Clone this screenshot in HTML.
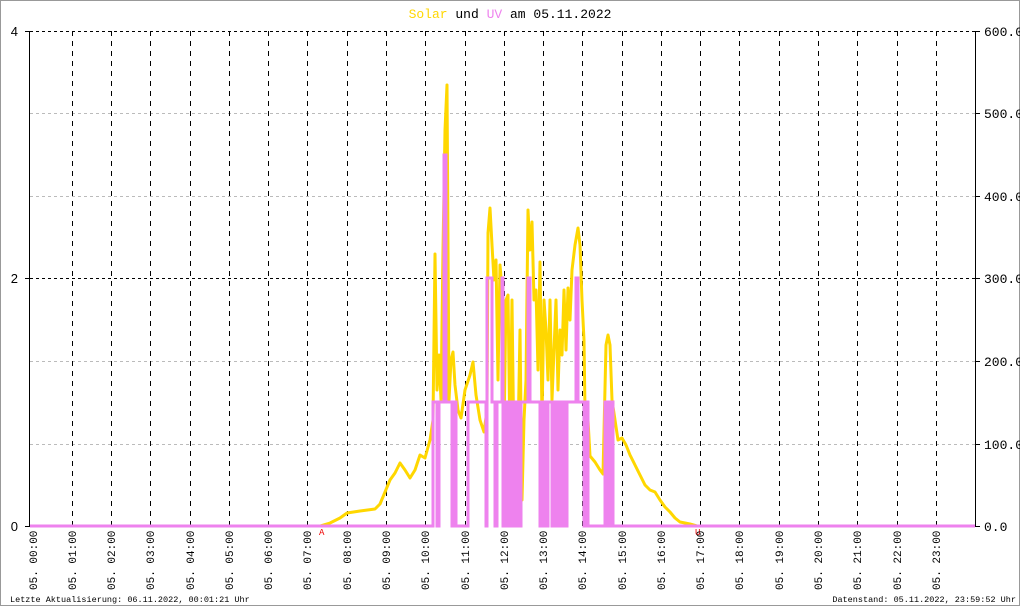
<!DOCTYPE html>
<html><head><meta charset="utf-8"><style>
html,body{margin:0;padding:0;background:#fff}
svg{display:block}
text{font-family:"Liberation Mono",monospace}
</style></head><body>
<svg width="1020" height="606" viewBox="0 0 1020 606" xmlns="http://www.w3.org/2000/svg">
<rect x="0.5" y="0.5" width="1019" height="605" fill="#fff" stroke="#999"/>
<text x="510" y="18" font-size="13" text-anchor="middle"><tspan fill="#ffd700">Solar</tspan><tspan fill="#000"> und </tspan><tspan fill="#ee82ee">UV</tspan><tspan fill="#000"> am 05.11.2022</tspan></text>
<g stroke="#bbb" stroke-dasharray="3,3" stroke-width="1">
<line x1="30" y1="113.5" x2="975" y2="113.5"/><line x1="30" y1="196.5" x2="975" y2="196.5"/>
<line x1="30" y1="361.5" x2="975" y2="361.5"/><line x1="30" y1="444.5" x2="975" y2="444.5"/>
</g>
<g stroke="#000" stroke-dasharray="3,3" stroke-width="1">
<line x1="30" y1="31.5" x2="975" y2="31.5"/><line x1="30" y1="278.5" x2="975" y2="278.5"/>
</g>
<g stroke="#000" stroke-dasharray="5,5" stroke-width="1" id="vl">
<line x1="72.5" y1="31" x2="72.5" y2="526"/><line x1="111.5" y1="31" x2="111.5" y2="526"/>
<line x1="150.5" y1="31" x2="150.5" y2="526"/><line x1="190.5" y1="31" x2="190.5" y2="526"/>
<line x1="229.5" y1="31" x2="229.5" y2="526"/><line x1="268.5" y1="31" x2="268.5" y2="526"/>
<line x1="307.5" y1="31" x2="307.5" y2="526"/><line x1="347.5" y1="31" x2="347.5" y2="526"/>
<line x1="386.5" y1="31" x2="386.5" y2="526"/><line x1="425.5" y1="31" x2="425.5" y2="526"/>
<line x1="465.5" y1="31" x2="465.5" y2="526"/><line x1="504.5" y1="31" x2="504.5" y2="526"/>
<line x1="543.5" y1="31" x2="543.5" y2="526"/><line x1="582.5" y1="31" x2="582.5" y2="526"/>
<line x1="622.5" y1="31" x2="622.5" y2="526"/><line x1="661.5" y1="31" x2="661.5" y2="526"/>
<line x1="700.5" y1="31" x2="700.5" y2="526"/><line x1="739.5" y1="31" x2="739.5" y2="526"/>
<line x1="779.5" y1="31" x2="779.5" y2="526"/><line x1="818.5" y1="31" x2="818.5" y2="526"/>
<line x1="857.5" y1="31" x2="857.5" y2="526"/><line x1="897.5" y1="31" x2="897.5" y2="526"/>
<line x1="936.5" y1="31" x2="936.5" y2="526"/>
</g>
<line x1="29.5" y1="31" x2="29.5" y2="527" stroke="#000"/>
<line x1="975.5" y1="31" x2="975.5" y2="527" stroke="#000"/>
<g stroke="#000"><line x1="25" y1="31.5" x2="29" y2="31.5"/><line x1="25" y1="278.5" x2="29" y2="278.5"/><line x1="25" y1="526.5" x2="29" y2="526.5"/>
<line x1="976" y1="31.5" x2="980" y2="31.5"/><line x1="976" y1="113.5" x2="980" y2="113.5"/><line x1="976" y1="196.5" x2="980" y2="196.5"/><line x1="976" y1="278.5" x2="980" y2="278.5"/><line x1="976" y1="361.5" x2="980" y2="361.5"/><line x1="976" y1="444.5" x2="980" y2="444.5"/><line x1="976" y1="526.5" x2="980" y2="526.5"/></g>
<g font-family="Liberation Sans,sans-serif" font-size="13" fill="#000" text-anchor="end">
<text x="18" y="36" style="font-family:'Liberation Sans',sans-serif">4</text>
<text x="18" y="283" style="font-family:'Liberation Sans',sans-serif">2</text>
<text x="18" y="531" style="font-family:'Liberation Sans',sans-serif">0</text>
</g>
<g font-size="13" fill="#000">
<text x="984" y="36">600.0</text><text x="984" y="118">500.0</text><text x="984" y="201">400.0</text>
<text x="984" y="283">300.0</text><text x="984" y="366">200.0</text><text x="984" y="449">100.0</text><text x="984" y="531">0.0</text>
</g>
<polyline fill="none" stroke="#ffd700" stroke-width="3" stroke-linejoin="round" points="30,526 320,526 330,523 340,518 347,513 360,511 375,509 380,504 385,492 390,480 395,473 400,463 405,470 410,478 415,470 420,455 425,458 430,440 433,420 435,254 437,390 439,355 441,400 443,250 445,130 447,85 449,400 451,360 453,352 455,385 458,410 461,418 465,390 470,375 473,362 476,395 480,420 484,432 487,410 488,233 490,208 492,245 494,280 496,260 498,380 500,265 502,290 504,430 506,300 508,295 510,440 512,300 514,460 516,410 518,440 520,330 522,500 524,420 526,380 528,210 530,250 532,222 534,300 536,290 538,370 540,262 542,420 544,300 546,330 548,380 550,300 552,400 554,350 556,300 558,390 560,330 562,355 564,290 566,350 568,288 570,320 572,270 575,245 578,228 580,245 582,300 584,340 586,480 588,420 590,456 595,462 600,470 603,474 606,345 608,335 610,345 612,400 615,420 618,440 622,438 626,445 630,455 635,465 640,475 645,485 650,490 655,492 660,500 665,507 670,512 675,518 680,522 690,524 697,526 975,526"/>
<polyline fill="none" stroke="#ee82ee" stroke-width="3" points="30,526 433,526 433,402 437,402 437,526 439,526 439,402 444,402 444,155 446,155 446,402 452,402 452,526 455,526 455,402 456,402 456,526 468,526 468,402 486,402 486,526 487,526 487,278 492,278 492,402 495,402 495,526 497,526 497,402 502,402 502,278 503,278 503,526 505,526 505,402 507,402 507,526 510,526 510,402 513,402 513,526 515,526 515,402 518,402 518,526 521,526 521,402 528,402 528,278 530,278 530,402 540,402 540,526 542,526 542,402 545,402 545,526 548,526 548,402 552,402 552,526 555,526 555,402 558,402 558,526 561,526 561,402 564,402 564,526 567,526 567,402 576,402 576,278 578,278 578,402 584,402 584,526 586,526 586,402 588,402 588,526 605,526 605,402 608,402 608,526 611,526 611,402 613,402 613,526 975,526"/>
<text x="319" y="535" font-size="9" fill="#e00">A</text>
<text x="695" y="535" font-size="9" fill="#e00">U</text>
<g font-size="11" fill="#000">
<text transform="translate(37,590) rotate(-90)">05. 00:00</text>
<text transform="translate(76,590) rotate(-90)">05. 01:00</text>
<text transform="translate(115,590) rotate(-90)">05. 02:00</text>
<text transform="translate(154,590) rotate(-90)">05. 03:00</text>
<text transform="translate(194,590) rotate(-90)">05. 04:00</text>
<text transform="translate(233,590) rotate(-90)">05. 05:00</text>
<text transform="translate(272,590) rotate(-90)">05. 06:00</text>
<text transform="translate(311,590) rotate(-90)">05. 07:00</text>
<text transform="translate(351,590) rotate(-90)">05. 08:00</text>
<text transform="translate(390,590) rotate(-90)">05. 09:00</text>
<text transform="translate(429,590) rotate(-90)">05. 10:00</text>
<text transform="translate(469,590) rotate(-90)">05. 11:00</text>
<text transform="translate(508,590) rotate(-90)">05. 12:00</text>
<text transform="translate(547,590) rotate(-90)">05. 13:00</text>
<text transform="translate(586,590) rotate(-90)">05. 14:00</text>
<text transform="translate(626,590) rotate(-90)">05. 15:00</text>
<text transform="translate(665,590) rotate(-90)">05. 16:00</text>
<text transform="translate(704,590) rotate(-90)">05. 17:00</text>
<text transform="translate(743,590) rotate(-90)">05. 18:00</text>
<text transform="translate(783,590) rotate(-90)">05. 19:00</text>
<text transform="translate(822,590) rotate(-90)">05. 20:00</text>
<text transform="translate(861,590) rotate(-90)">05. 21:00</text>
<text transform="translate(901,590) rotate(-90)">05. 22:00</text>
<text transform="translate(940,590) rotate(-90)">05. 23:00</text>
</g>
<text x="10" y="602" font-size="8.5" fill="#000">Letzte Aktualisierung: 06.11.2022, 00:01:21 Uhr</text>
<text x="1016" y="602" font-size="8.5" fill="#000" text-anchor="end">Datenstand: 05.11.2022, 23:59:52 Uhr</text>
</svg>
</body></html>
